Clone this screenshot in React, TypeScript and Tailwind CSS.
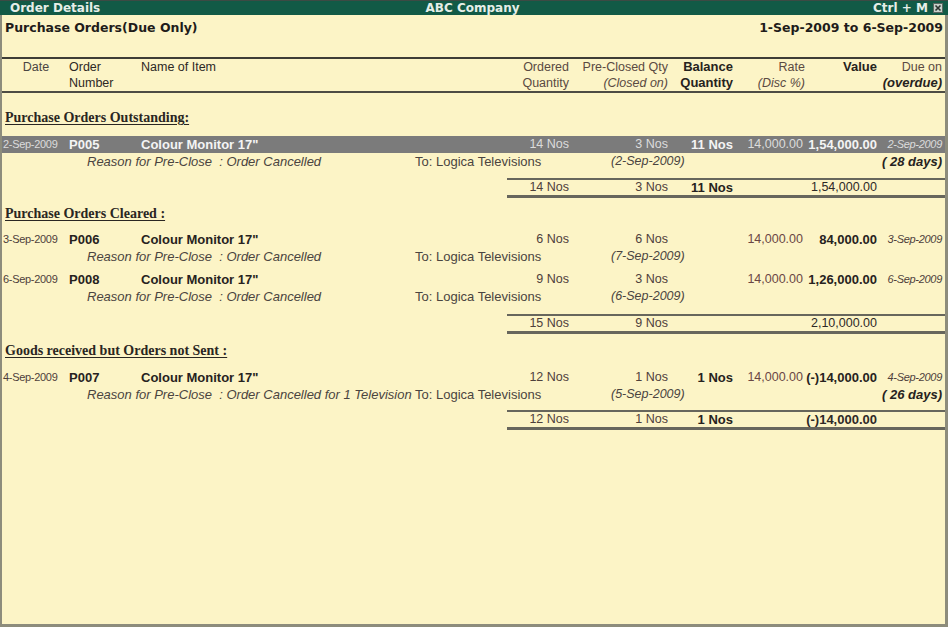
import React from "react";

type Entry = {
  date: string;
  no: string;
  item: string;
  reason: string;
  to: string;
  ordered: string;
  preClosed: string;
  closedOn: string;
  balance?: string;
  rate: string;
  value: string;
  due: string;
  overdue?: string;
  active?: boolean;
  gap: string;
};

type Section = {
  title: string;
  top: string;
  entries: Entry[];
  totalGap: string;
  total: { ordered: string; pre: string; bal?: string; value: string; bold?: boolean };
};

const sections: Section[] = [
  {
    title: "Purchase Orders Outstanding:",
    top: "mt-[16px]",
    entries: [
      {
        date: "2-Sep-2009",
        no: "P005",
        item: "Colour Monitor 17\"",
        reason: "Reason for Pre-Close  : Order Cancelled",
        to: "To: Logica Televisions",
        ordered: "14 Nos",
        preClosed: "3 Nos",
        closedOn: "(2-Sep-2009)",
        balance: "11 Nos",
        rate: "14,000.00",
        value: "1,54,000.00",
        due: "2-Sep-2009",
        overdue: "( 28 days)",
        active: true,
        gap: "mt-[9px]",
      },
    ],
    totalGap: "mt-[8px]",
    total: { ordered: "14 Nos", pre: "3 Nos", bal: "11 Nos", value: "1,54,000.00" },
  },
  {
    title: "Purchase Orders Cleared :",
    top: "mt-[7px]",
    entries: [
      {
        date: "3-Sep-2009",
        no: "P006",
        item: "Colour Monitor 17\"",
        reason: "Reason for Pre-Close  : Order Cancelled",
        to: "To: Logica Televisions",
        ordered: "6 Nos",
        preClosed: "6 Nos",
        closedOn: "(7-Sep-2009)",
        rate: "14,000.00",
        value: "84,000.00",
        due: "3-Sep-2009",
        gap: "mt-[8px]",
      },
      {
        date: "6-Sep-2009",
        no: "P008",
        item: "Colour Monitor 17\"",
        reason: "Reason for Pre-Close  : Order Cancelled",
        to: "To: Logica Televisions",
        ordered: "9 Nos",
        preClosed: "3 Nos",
        closedOn: "(6-Sep-2009)",
        rate: "14,000.00",
        value: "1,26,000.00",
        due: "6-Sep-2009",
        gap: "mt-[6px]",
      },
    ],
    totalGap: "mt-[9px]",
    total: { ordered: "15 Nos", pre: "9 Nos", value: "2,10,000.00" },
  },
  {
    title: "Goods received but Orders not Sent :",
    top: "mt-[8px]",
    entries: [
      {
        date: "4-Sep-2009",
        no: "P007",
        item: "Colour Monitor 17\"",
        reason: "Reason for Pre-Close  : Order Cancelled for 1 Television",
        to: "To: Logica Televisions",
        ordered: "12 Nos",
        preClosed: "1 Nos",
        closedOn: "(5-Sep-2009)",
        balance: "1 Nos",
        rate: "14,000.00",
        value: "(-)14,000.00",
        due: "4-Sep-2009",
        overdue: "( 26 days)",
        gap: "mt-[9px]",
      },
    ],
    totalGap: "mt-[7px]",
    total: { ordered: "12 Nos", pre: "1 Nos", bal: "1 Nos", value: "(-)14,000.00", bold: true },
  },
];

const GRID =
  "grid grid-cols-[66px_72px_1fr_60px_99px_65px_72px_72px_65px] pl-px pr-[3px]";

function EntryRows({ e }: { e: Entry }) {
  const hi = e.active;
  const strong = hi ? "text-[#f4f4f4]" : "text-[#262220]";
  return (
    <div className={e.gap}>
      <div
        className={`${GRID} h-[17px] leading-[17px] ${
          hi ? "bg-[#7b7b7b] text-[#dcdcdc]" : "text-[#4e403b]"
        }`}
      >
        <div className="text-[11px] tracking-[-0.3px]">{e.date}</div>
        <div className={`font-bold text-[13px] ${strong}`}>{e.no}</div>
        <div className={`font-bold text-[13px] ${strong}`}>{e.item}</div>
        <div className="text-right">{e.ordered}</div>
        <div className="text-right">{e.preClosed}</div>
        <div className={`text-right font-bold text-[13px] ${strong}`}>{e.balance}</div>
        <div className={`text-right pr-[2px] ${hi ? "" : "text-[#6a4644]"}`}>{e.rate}</div>
        <div className={`text-right font-bold text-[13px] ${strong}`}>{e.value}</div>
        <div className="text-right italic text-[11px] tracking-[-0.3px]">{e.due}</div>
      </div>
      <div className={`${GRID} h-[17px] leading-[17px] text-[#4a4440]`}>
        <div className="col-start-2 col-span-3 flex pl-[18px] whitespace-pre">
          <span className="italic text-[13px] w-[328px] shrink-0">{e.reason}</span>
          <span className="text-[13px]">{e.to}</span>
        </div>
        <div className="col-start-5 col-span-2 pl-[42px] italic">{e.closedOn}</div>
        <div className="col-start-9 text-right italic font-bold text-[13px] text-[#262220]">
          {e.overdue}
        </div>
      </div>
    </div>
  );
}

function Subtotal({ s }: { s: Section }) {
  const t = s.total;
  return (
    <div className={`${s.totalGap} ml-[505px] border-t-2 border-b-[3px] border-[#67665c]`}>
      <div className="flex h-[15px] leading-[15px] text-[#4e403b]">
        <div className="w-[62px] text-right">{t.ordered}</div>
        <div className="w-[99px] text-right">{t.pre}</div>
        <div className="w-[65px] text-right font-bold text-[13px] text-[#262220]">{t.bal}</div>
        <div className="w-[72px]" />
        <div className={`w-[72px] text-right text-[#2e2926] ${t.bold ? "font-bold text-[13px]" : ""}`}>
          {t.value}
        </div>
      </div>
    </div>
  );
}

function CloseBox() {
  return (
    <svg width="10" height="10" viewBox="0 0 10 10" className="block">
      <rect x="0.5" y="0.5" width="9" height="9" fill="#c7d0ca" stroke="#5b6660" />
      <path d="M2.5 2.5 L7.5 7.5 M7.5 2.5 L2.5 7.5" stroke="#2c3430" strokeWidth="1.6" />
    </svg>
  );
}

export default function App() {
  return (
    <div className="w-[948px] h-[627px] flex flex-col bg-[#fcf4c6] font-['Liberation_Sans',Arial,sans-serif] text-[12.5px] overflow-hidden">
      <div className="h-[15px] shrink-0 bg-[#125a46] border-t border-[#3d4a44] flex items-center pl-[10px] pr-[5px] font-['DejaVu_Sans',sans-serif] font-bold text-[12px] leading-[14px] text-[#e6eee8]">
        <div className="w-[300px]">Order Details</div>
        <div className="flex-1 text-center pr-[8px]">ABC Company</div>
        <div className="w-[300px] flex justify-end items-center gap-[5px]">
          <span>Ctrl + M</span>
          <CloseBox />
        </div>
      </div>
      <div className="flex-1 border-l-2 border-r-[3px] border-b-[3px] border-[#8d8c7c]">
        <div className="h-[42px] flex justify-between pl-[3px] pr-[2px] pt-[5px] font-['DejaVu_Sans',sans-serif] font-bold text-[12.5px] leading-[16px] text-[#1f1c1a]">
          <span>Purchase Orders(Due Only)</span>
          <span>1-Sep-2009 to 6-Sep-2009</span>
        </div>
        <div className="h-[2px] bg-[#3e3d36]" />
        <div className={`${GRID} h-[32px] leading-[16px] text-[#5a4a42]`}>
          <div className="text-center text-[#4a4542]">Date</div>
          <div className="text-[#2d2825]">
            Order
            <br />
            Number
          </div>
          <div className="text-[#2d2825]">Name of Item</div>
          <div className="text-right">
            Ordered
            <br />
            Quantity
          </div>
          <div className="text-right whitespace-nowrap">
            Pre-Closed Qty
            <br />
            <i>(Closed on)</i>
          </div>
          <div className="text-right font-bold text-[13px] text-[#262220]">
            Balance
            <br />
            Quantity
          </div>
          <div className="text-right">
            Rate
            <br />
            <i>(Disc %)</i>
          </div>
          <div className="text-right font-bold text-[13px] text-[#262220]">Value</div>
          <div className="text-right">
            Due on
            <br />
            <b className="italic text-[13px] text-[#262220]">(overdue)</b>
          </div>
        </div>
        <div className="h-[2px] bg-[#4d4c44]" />
        {sections.map((s) => (
          <div key={s.title} className={s.top}>
            <div className="h-[18px] leading-[18px] pl-[3px] font-['Liberation_Serif',serif] font-bold text-[14px] text-[#2a2622]">
              <span className="underline decoration-1 underline-offset-2">{s.title}</span>
            </div>
            {s.entries.map((e) => (
              <EntryRows key={e.no} e={e} />
            ))}
            <Subtotal s={s} />
          </div>
        ))}
      </div>
    </div>
  );
}
